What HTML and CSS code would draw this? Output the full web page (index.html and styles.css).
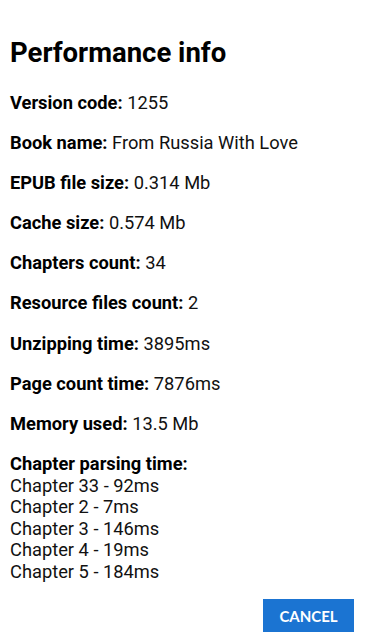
FILE: index.html
```html
<!DOCTYPE html>
<html lang="en">
<head>
    <meta charset="UTF-8">
    <meta name="viewport" content="width=device-width, initial-scale=1.0">
    <title>Performance info</title>
    <link rel="stylesheet" href="styles.css">
</head>
<body>

    <div class="dialog">
        <h1 class="title">Performance info</h1>

        <div class="info">
            <p><strong>Version code:</strong> 1255</p>
            <p><strong>Book name:</strong> From Russia With Love</p>
            <p><strong>EPUB file size:</strong> 0.314 Mb</p>
            <p><strong>Cache size:</strong> 0.574 Mb</p>
            <p><strong>Chapters count:</strong> 34</p>
            <p><strong>Resource files count:</strong> 2</p>
            <p><strong>Unzipping time:</strong> 3895ms</p>
            <p><strong>Page count time:</strong> 7876ms</p>
            <p><strong>Memory used:</strong> 13.5 Mb</p>
            <p class="chapters">
                <strong>Chapter parsing time:</strong><br>
                Chapter 33 - 92ms<br>
                Chapter 2 - 7ms<br>
                Chapter 3 - 146ms<br>
                Chapter 4 - 19ms<br>
                Chapter 5 - 184ms
            </p>
        </div>

        <div class="actions">
            <button class="btn-cancel">CANCEL</button>
        </div>
    </div>

</body>
</html>
```

FILE: styles.css
```css
body {
    font-family: Roboto, "Noto Sans", sans-serif;
    background-color: #fff;
    color: #111;
    margin: 0;
    padding: 0;
}
.dialog {
    padding: 0 12px 0 10px;
}
.title {
    font-size: 27.5px;
    font-weight: bold;
    line-height: 32px;
    margin: 0;
    padding-top: 37px;
    color: #000;
}
.info {
    margin-top: 22.5px;
}
.info p {
    font-size: 18.3px;
    line-height: 21px;
    margin: 0 0 19.2px 0;
}
.info strong {
    font-weight: bold;
    color: #000;
}
.info .chapters {
    line-height: 21.5px;
    margin-bottom: 0;
}
.actions {
    display: flex;
    justify-content: flex-end;
    margin-top: 17px;
}
.btn-cancel {
    font-family: Lato, "Open Sans", sans-serif;
    font-size: 15px;
    font-weight: bold;
    color: #fff;
    background-color: #1b74d2;
    border: none;
    border-radius: 0;
    width: 91px;
    height: 33px;
    padding: 0;
}
```
